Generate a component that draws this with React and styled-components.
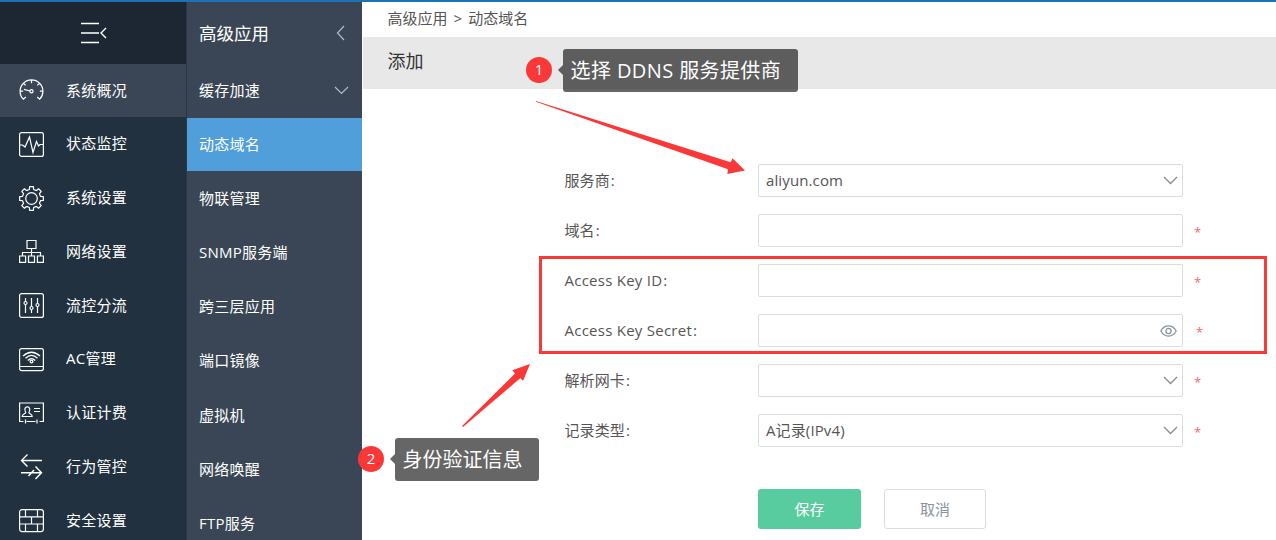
import styled, { createGlobalStyle, css } from "styled-components";

const GlobalStyle = createGlobalStyle`
  * {
    box-sizing: border-box;
  }

  body {
    margin: 0;
    overflow: hidden;
    background: #fff;
    font-family: "Open Sans", "Noto Sans CJK SC", sans-serif;
    font-size: 15px;
    color: #555;
  }
`;

const Page = styled.div`
  position: relative;
  display: flex;
  height: 540px;
  border-top: 2px solid #1b72b5;
  overflow: hidden;
`;

const MainNav = styled.nav`
  width: 187px;
  flex-shrink: 0;
  background: #223140;
  border-right: 1px solid #2a3747;
  color: #fff;
`;

const NavToggle = styled.div`
  display: flex;
  align-items: center;
  height: 62px;
  padding-left: 81px;
  background: #1c2733;
`;

const NavItem = styled.div`
  display: flex;
  align-items: center;
  height: 53px;
  margin-bottom: 0.75px;
  padding-left: 19px;
  background: ${({ $active }) => ($active ? "#3a4655" : "transparent")};
`;

const NavIcon = styled.svg`
  width: 25px;
  height: 25px;
  margin-right: 22px;
  flex-shrink: 0;
  fill: none;
  stroke: #fff;
  stroke-width: 1.2;
  overflow: visible;
`;

const NavText = styled.span`
  padding-bottom: 2px;
  line-height: 20px;
  letter-spacing: 0.25px;
  white-space: nowrap;
`;

const SubNav = styled.nav`
  width: 175px;
  flex-shrink: 0;
  background: #3a4655;
  color: #fff;
`;

const SubTitle = styled.div`
  display: flex;
  align-items: center;
  justify-content: space-between;
  height: 62px;
  padding: 0 17px 0 12px;
  font-size: 17.5px;
`;

const SubTitleText = styled.span`
  padding-bottom: 2px;
`;

const SubItem = styled.div`
  display: flex;
  align-items: center;
  justify-content: space-between;
  height: 53px;
  margin-bottom: 1.2px;
  padding: 0 13px 0 12px;
  white-space: nowrap;
  ${({ $active }) =>
    $active &&
    css`
      background: #509fda;
    `}
`;

const LineIcon = styled.svg`
  flex-shrink: 0;
  fill: none;
  stroke: ${({ $color }) => $color || "#b4bac1"};
  stroke-width: ${({ $weight }) => $weight || 1.2};
`;

const Main = styled.main`
  flex: 1;
  padding-left: 1px;
`;

const Breadcrumb = styled.div`
  height: 35px;
  padding-left: 24.5px;
  line-height: 33px;
  word-spacing: 2.2px;
`;

const SectionHead = styled.div`
  height: 52px;
  padding-left: 24.5px;
  line-height: 49px;
  font-size: 18px;
  color: #333;
  background: #e8e8e8;
`;

const Form = styled.form`
  padding: 75px 0 0 201.5px;
`;

const FormRow = styled.div`
  display: flex;
  align-items: center;
  height: 33px;
  margin-bottom: 17px;
`;

const Label = styled.label`
  width: 193.5px;
  padding-bottom: 2px;
  white-space: nowrap;
  letter-spacing: ${({ $latin }) => ($latin ? "0.25px" : "0.1px")};

  &::after {
    content: ":";
    margin-left: 1px;
  }
`;

const Field = styled.div`
  display: flex;
  align-items: center;
  justify-content: space-between;
  width: 425px;
  height: 33px;
  padding: 0 4px 0 7px;
  border: 1px solid #dcdcdc;
  border-radius: 2px;
  background: #fff;
`;

const FieldValue = styled.span`
  padding-bottom: 2px;
  letter-spacing: 0.12px;
`;

const FieldEnd = styled.span`
  display: flex;
  margin-left: auto;
  margin-right: ${({ $inset }) => $inset || 0}px;
`;

const Required = styled.span`
  margin-left: ${({ $wide }) => ($wide ? 13 : 11)}px;
  padding-top: 2px;
  font-size: 13px;
  color: #f96868;
`;

const Buttons = styled.div`
  display: flex;
  gap: 23px;
  margin: 42px 0 0 193.5px;
`;

const Button = styled.button`
  width: 103px;
  height: 40px;
  padding: 0 0 2px;
  border: 0;
  border-radius: 3px;
  font: inherit;
  color: #fff;
  background: #58cb9f;
`;

const CancelButton = styled(Button)`
  width: 102px;
  border: 1px solid #dcdcdc;
  color: #8a939c;
  background: #fff;
`;

/* Guide marks sit over the whole page */
const Callout = styled.div`
  position: absolute;
  left: ${({ $x }) => $x}px;
  top: ${({ $y }) => $y}px;
  display: flex;
  align-items: center;
  color: #fff;
`;

const Badge = styled.span`
  width: 26px;
  height: 26px;
  margin: 0 6px 2px 0;
  border-radius: 50%;
  text-align: center;
  line-height: 24px;
  font-size: 15px;
  background: #fb3838;
`;

const Pointer = styled.span`
  margin-bottom: 2px;
  border: 5px solid transparent;
  border-left: 0;
  border-right-color: rgba(0, 0, 0, 0.6);
`;

const Bubble = styled.span`
  width: ${({ $width }) => $width}px;
  height: 43px;
  padding-left: 7.5px;
  border-radius: 3px;
  line-height: 44px;
  font-size: 20px;
  letter-spacing: ${({ $spacing }) => $spacing || 0}px;
  white-space: nowrap;
  background: rgba(0, 0, 0, 0.6);
`;

const Highlight = styled.div`
  position: absolute;
  left: 539px;
  top: 254px;
  width: 728px;
  height: 98px;
  border: 3px solid #fb3838;
`;

const Arrows = styled.svg`
  position: absolute;
  left: 0;
  top: -2px;
  fill: #fb3838;
  pointer-events: none;
`;

const gearPath = Array.from({ length: 8 }, (_, i) => {
  const point = (r, deg) => {
    const a = ((i * 45 + deg - 90) * Math.PI) / 180;
    return `${(12.5 + r * Math.cos(a)).toFixed(2)} ${(12.5 + r * Math.sin(a)).toFixed(2)}`;
  };
  return `${i ? "L" : "M"}${point(9.2, -17)}L${point(9.4, -13)}L${point(12, -9)}L${point(12, 9)}L${point(9.4, 13)}L${point(9.2, 17)}`;
}).join("");

const navItems = [
  {
    text: "系统概况",
    active: true,
    icon: (
      <>
        <path d="M6.8 19L4.3 21.2A11.4 11.4 0 1 1 20.7 21.2L18.2 19M12.5 2V5.2M1 13.2H4.2M20.8 13.2H24M4.4 5.1L6.7 7.4M20.6 5.1L18.3 7.4M5 11.4L11 13" />
        <circle cx="12.5" cy="13.3" r="1.6" />
      </>
    ),
  },
  {
    text: "状态监控",
    icon: (
      <>
        <rect x="0.6" y="0.6" width="23.8" height="23.8" rx="2" />
        <path d="M1 13H3.5L6 15L10.5 5L14 20.5L17.5 9.5L19.5 14L21 12.5H24" />
      </>
    ),
  },
  {
    text: "系统设置",
    icon: (
      <>
        <path d={`${gearPath}Z`} strokeLinejoin="round" />
        <circle cx="12.5" cy="12.5" r="5.8" />
      </>
    ),
  },
  {
    text: "网络设置",
    icon: (
      <path d="M8 1.5H17V9.5H8ZM.6 17H6.6V23.4H.6ZM9.5 17H15.5V23.4H9.5ZM18.4 17H24.4V23.4H18.4ZM12.5 9.5V17M3.5 17V13.5H21.5V17" />
    ),
  },
  {
    text: "流控分流",
    icon: (
      <>
        <rect x="0.6" y="0.6" width="23.8" height="23.8" rx="2" />
        <path d="M6.5 5V8.5M6.5 11.5V20M12.5 5V13.5M12.5 16.5V20M18.5 5V10.5M18.5 13.5V20" />
        <circle cx="6.5" cy="10" r="1.5" />
        <circle cx="12.5" cy="15" r="1.5" />
        <circle cx="18.5" cy="12" r="1.5" />
      </>
    ),
  },
  {
    text: "AC管理",
    icon: (
      <>
        <rect x="0.6" y="1.6" width="23.8" height="22" rx="2" />
        <path d="M1 19.5H24M4 9Q12.5 1.5 21 9M6.5 11.3Q12.5 5.6 18.5 11.3M8.8 13.5Q12.5 9.7 16.2 13.5" />
        <circle cx="12.5" cy="14.5" r="1.4" />
      </>
    ),
  },
  {
    text: "认证计费",
    icon: (
      <>
        <path d="M4.5 20.5H.6V2H24.4V20.5H20.5M7.5 20.5H16.5M6.5 18.5V22.5M18 18.5V22.5M15 7.5H21M15 10.5H21" />
        <path d="M6.7 11.5C5 8.5 6 5.8 8.3 5.8S11.6 8.5 9.9 11.5C10 13 13.2 12.5 13.2 15.5H3.2C3.2 12.5 6.6 13 6.7 11.5Z" />
      </>
    ),
  },
  {
    text: "行为管控",
    icon: (
      <path
        d="M23 6.5H2.5M8.5 .5L2.5 6.5L8.5 12.5M2 18.7H22.5M16.5 12.5L22.5 18.7L16.5 25M9.5 22L15 16"
        strokeWidth="1.4"
      />
    ),
  },
  {
    text: "安全设置",
    icon: (
      <>
        <rect x="0.6" y="1.6" width="23.8" height="22" rx="2.5" />
        <path d="M1 8.8H24M1 16H24M6.5 2V8.8M18.5 2V8.8M12.5 8.8V16M6.5 16V23.5M18.5 16V23.5" />
      </>
    ),
  },
];

const subItems = [
  "缓存加速",
  "动态域名",
  "物联管理",
  "SNMP服务端",
  "跨三层应用",
  "端口镜像",
  "虚拟机",
  "网络唤醒",
  "FTP服务",
];

const fields = [
  { label: "服务商", value: "aliyun.com", type: "select" },
  { label: "域名", required: true },
  { label: "Access Key ID", latin: true, required: true },
  { label: "Access Key Secret", latin: true, type: "secret", required: true },
  { label: "解析网卡", type: "select", required: true },
  { label: "记录类型", value: "A记录(IPv4)", type: "select", required: true },
];

function ChevronDown({ color, weight }) {
  return (
    <LineIcon $color={color} $weight={weight} width="15" height="9" viewBox="0 0 15 9">
      <path d="M1 1L7.5 7.5L14 1" />
    </LineIcon>
  );
}

function Eye() {
  return (
    <LineIcon $color="#87919a" width="17" height="12" viewBox="0 0 17 12">
      <path d="M.8 6C4.5-.8 12.5-.8 16.2 6C12.5 12.8 4.5 12.8 .8 6Z" />
      <circle cx="8.5" cy="6" r="2.6" />
    </LineIcon>
  );
}

export default function App() {
  return (
    <>
      <GlobalStyle />
      <Page>
        <MainNav>
          <NavToggle>
            <LineIcon $color="#fff" $weight="1.4" width="26" height="22" viewBox="0 0 26 22">
              <path d="M0 1.5H18M0 11H18M0 20.5H18M25 6L20 11L25 16" />
            </LineIcon>
          </NavToggle>
          {navItems.map(({ text, active, icon }) => (
            <NavItem key={text} $active={active}>
              <NavIcon viewBox="0 0 25 25">{icon}</NavIcon>
              <NavText>{text}</NavText>
            </NavItem>
          ))}
        </MainNav>

        <SubNav>
          <SubTitle>
            <SubTitleText>高级应用</SubTitleText>
            <LineIcon width="9" height="16" viewBox="0 0 9 16">
              <path d="M8 1L1.5 8L8 15" />
            </LineIcon>
          </SubTitle>
          {subItems.map((text, i) => (
            <SubItem key={text} $active={i === 1}>
              <NavText>{text}</NavText>
              {i === 0 && <ChevronDown />}
            </SubItem>
          ))}
        </SubNav>

        <Main>
          <Breadcrumb>高级应用 &gt; 动态域名</Breadcrumb>
          <SectionHead>添加</SectionHead>
          <Form>
            {fields.map(({ label, value, type, latin, required }) => (
              <FormRow key={label}>
                <Label $latin={latin}>{label}</Label>
                <Field>
                  {value && <FieldValue>{value}</FieldValue>}
                  {type === "select" && (
                    <FieldEnd>
                      <ChevronDown color="#8c8c8c" weight="1.3" />
                    </FieldEnd>
                  )}
                  {type === "secret" && (
                    <FieldEnd $inset={1.5}>
                      <Eye />
                    </FieldEnd>
                  )}
                </Field>
                {required && <Required $wide={type === "secret"}>*</Required>}
              </FormRow>
            ))}
            <Buttons>
              <Button type="button">保存</Button>
              <CancelButton type="button">取消</CancelButton>
            </Buttons>
          </Form>
        </Main>

        <Highlight />
        <Arrows width="1276" height="540">
          <path d="M536 101L730.7 162.2L732.5 158.3L745 170.5L727.3 174L728 169.3L536 101.8Z" />
          <path d="M462 426L515 373.5L512.3 370.3L530 364L523 381L520.5 378L463 427Z" />
        </Arrows>
        <Callout $x={526} $y={47}>
          <Badge>1</Badge>
          <Pointer />
          <Bubble $width={235} $spacing={0.4}>
            选择 DDNS 服务提供商
          </Bubble>
        </Callout>
        <Callout $x={358} $y={436}>
          <Badge>2</Badge>
          <Pointer />
          <Bubble $width={144}>身份验证信息</Bubble>
        </Callout>
      </Page>
    </>
  );
}
